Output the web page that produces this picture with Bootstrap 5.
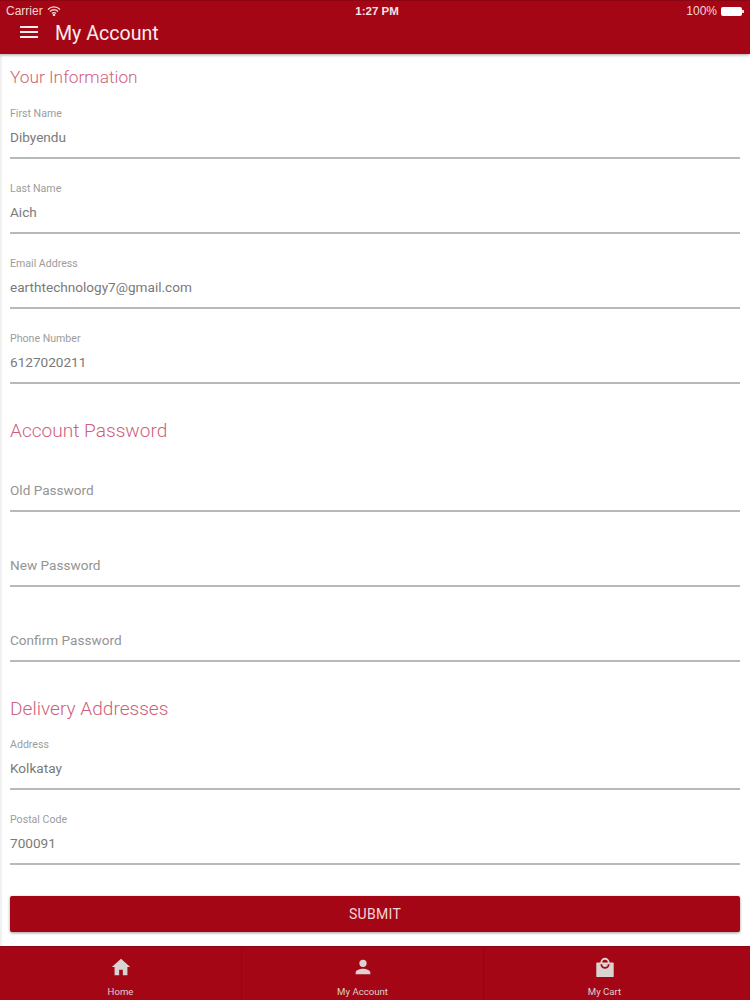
<!DOCTYPE html>
<html lang="en">
  <head>
    <meta charset="UTF-8">
    <meta name="viewport" content="width=device-width, initial-scale=1.0">
    <title>My Account</title>
    <link href="https://cdn.jsdelivr.net/npm/bootstrap@5.3.3/dist/css/bootstrap.min.css" rel="stylesheet">
    <style>
      html, body { height: 1000px; overflow: hidden; }
      body { font-family: Roboto, "Liberation Sans", sans-serif; background: #fff; }
      .app-top { height: 54px; background: #a50615; color: #fff; box-shadow: 0 1px 3px rgba(0,0,0,.35); border-top: 1px solid #8c0512; position: relative; }
      .status-row { height: 20px; font-size: 12px; line-height: 20px; padding: 0 8px 0 6px; color: #f6d5d8; font-family: "Liberation Sans", sans-serif; }
      .status-time { font-weight: 700; color: #f6e4e5; font-size: 11.5px; padding-left: 6px; }
      .batt { width: 21px; height: 9px; background: #fff; border-radius: 2px; position: relative; }
      .batt::after { content: ""; position: absolute; right: -2px; top: 3px; width: 2px; height: 3px; background: #f6d5d8; }
      .tool-row { padding-left: 20px; gap: 17px; height: 26px; }
      .menu-bars { width: 18px; height: 12px; margin-bottom: 4px; border-top: 2px solid #fbeced; border-bottom: 2px solid #fbeced; position: relative; }
      .menu-bars::after { content: ""; position: absolute; left: 0; right: 0; top: 3px; height: 2px; background: #fbeced; }
      .app-title { font-size: 19.6px; line-height: 26px; color: #fbeced; }
      .form-wrap { height: 892px; padding: 0 10px 0 8px; border-left: 2px solid #f1f1f1; }
      .sec-title { font-weight: 300; color: #cf5f7c; font-size: 19.1px; line-height: 24px; padding-top: 35px; margin: 0 0 -6px; }
      .sec-title.first-sec { font-size: 17.3px; padding-top: 11px; margin-bottom: -5px; }
      .fld { padding-top: 23px; border-bottom: 2px solid #b9b9b9; }
      .fld-label { display: block; font-size: 10.6px; line-height: 14px; color: #9c9c9c; margin: 0 0 6px; }
      .fld-input.form-control { border: 0; border-radius: 0; padding: 0; margin-bottom: 10px; height: 20px; font-size: 13.6px; line-height: 20px; color: #7a7a7a; box-shadow: none; }
      .fld-input.form-control::placeholder { color: #949494; opacity: 1; }
      .fld-plain { padding-top: 43px; }
      .btn.submit-btn { display: block; width: 100%; height: 36px; margin-top: 31px; padding: 0; background: #a50615; border: 0; border-radius: 2px; color: #f6d5d8; font-size: 14px; letter-spacing: .3px; box-shadow: 0 1px 3px rgba(0,0,0,.4); }
      .tab-bar { height: 54px; background: #a50615; padding-right: 25px; border-top: 1px solid #8c0512; }
      .tab-item { flex: 1 1 0; color: #dccfcf; font-size: 9.6px; line-height: 12px; padding-top: 9px; border-right: 1px solid #8a0a14; gap: 8px; }
      .tab-item:last-child { border-right: 0; }
      .tab-item svg { width: 22px; height: 22px; fill: #d9d4d2; }
    </style>
  </head>
  <body class="d-flex flex-column">
    <header class="app-top">
      <div class="status-row d-flex align-items-center justify-content-between">
        <div class="d-flex align-items-center gap-1" style="width:200px">
          Carrier
          <svg width="14" height="10" viewBox="0 0 14 10" fill="none" stroke="#f6d5d8" stroke-width="1.4"><path d="M1 3.4a8.5 8.5 0 0 1 12 0M3 5.5a5.6 5.6 0 0 1 8 0M5 7.5a2.8 2.8 0 0 1 4 0"/><circle cx="7" cy="9" r=".6" fill="#f6d5d8"/></svg>
        </div>
        <div class="status-time">1:27 PM</div>
        <div class="d-flex align-items-center justify-content-end gap-1" style="width:200px">100% <span class="batt"></span></div>
      </div>
      <div class="tool-row d-flex align-items-center">
        <span class="menu-bars"></span>
        <span class="app-title">My Account</span>
      </div>
    </header>

    <form class="form-wrap">
      <h2 class="sec-title first-sec">Your Information</h2>
      <div class="fld"><label class="fld-label" for="f1">First Name</label><input id="f1" class="form-control fld-input" value="Dibyendu"></div>
      <div class="fld"><label class="fld-label" for="f2">Last Name</label><input id="f2" class="form-control fld-input" value="Aich"></div>
      <div class="fld"><label class="fld-label" for="f3">Email Address</label><input id="f3" class="form-control fld-input" value="earthtechnology7@gmail.com"></div>
      <div class="fld"><label class="fld-label" for="f4">Phone Number</label><input id="f4" class="form-control fld-input" value="6127020211"></div>

      <h2 class="sec-title">Account Password</h2>
      <div class="fld fld-plain"><input class="form-control fld-input" placeholder="Old Password"></div>
      <div class="fld fld-plain"><input class="form-control fld-input" placeholder="New Password"></div>
      <div class="fld fld-plain"><input class="form-control fld-input" placeholder="Confirm Password"></div>

      <h2 class="sec-title">Delivery Addresses</h2>
      <div class="fld"><label class="fld-label" for="f5">Address</label><input id="f5" class="form-control fld-input" value="Kolkatay"></div>
      <div class="fld"><label class="fld-label" for="f6">Postal Code</label><input id="f6" class="form-control fld-input" value="700091"></div>

      <button type="button" class="btn submit-btn">SUBMIT</button>
    </form>

    <footer class="tab-bar d-flex">
      <a class="tab-item d-flex flex-column align-items-center text-decoration-none">
        <svg viewBox="0 0 24 24"><path d="M10 21v-6h4v6h5v-9h3L12 3 2 12h3v9z"/></svg>Home
      </a>
      <a class="tab-item d-flex flex-column align-items-center text-decoration-none">
        <svg viewBox="0 0 24 24"><path d="M12 12a4 4 0 1 0 0-8 4 4 0 0 0 0 8zm0 2c-2.7 0-8 1.3-8 4v2h16v-2c0-2.7-5.3-4-8-4z"/></svg>My Account
      </a>
      <a class="tab-item d-flex flex-column align-items-center text-decoration-none">
        <svg viewBox="0 0 24 24"><path d="M20.500 7H17a5 5 0 0 0-10 0H3.500a1 1 0 0 0-1 1v14a1 1 0 0 0 1 1h17a1 1 0 0 0 1-1V8a1 1 0 0 0-1-1zM12 4a3 3 0 0 1 3 3H9a3 3 0 0 1 3-3zm0 10a5 5 0 0 1-5-5h2a3 3 0 0 0 6 0h2a5 5 0 0 1-5 5z"/></svg>My Cart
      </a>
    </footer>
    <script src="https://cdn.jsdelivr.net/npm/bootstrap@5.3.3/dist/js/bootstrap.bundle.min.js"></script>
  </body>
</html>
